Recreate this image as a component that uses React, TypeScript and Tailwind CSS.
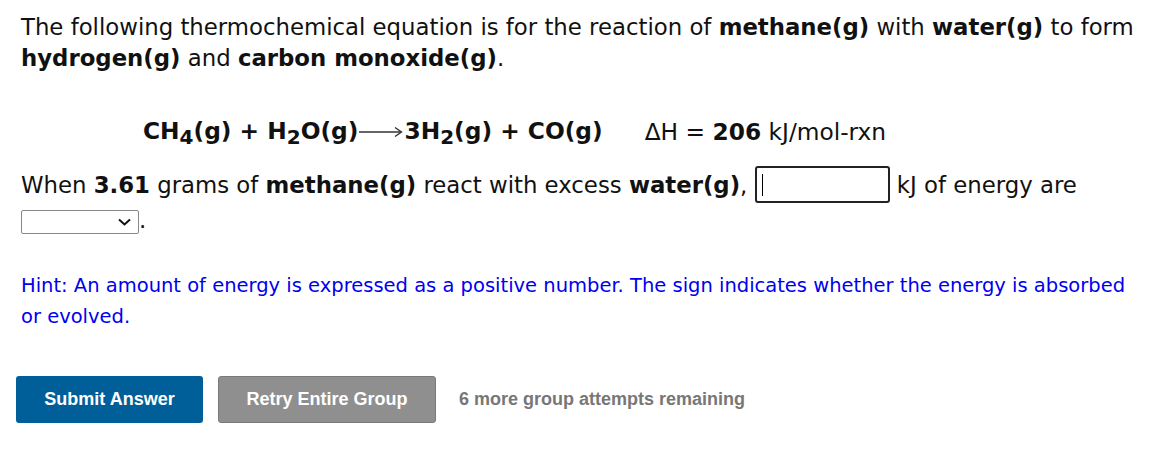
import React from "react";

function Sub({ children }: { children: React.ReactNode }) {
  return <span className="text-[20px] relative top-[5px]">{children}</span>;
}

export default function App() {
  const f = { fontFamily: '"DejaVu Sans", Verdana, sans-serif' };
  return (
    <div className="w-[1173px] h-[471px] bg-white text-[#111] overflow-hidden" style={f}>
      <div className="pl-[21px] pr-[8px] pt-[12px] text-[22.8px] leading-[31px]">
        <p>
          The following thermochemical equation is for the reaction of <b>methane(g)</b> with <b>water(g)</b> to form{" "}
          <b>hydrogen(g)</b> and <b>carbon monoxide(g)</b>.
        </p>
        <div className="mt-[42px] pl-[122px] flex items-center h-[31px] text-[23.3px]">
          <b>
            CH<Sub>4</Sub>(g) + H<Sub>2</Sub>O(g)
          </b>
          <svg width="44" height="14" viewBox="0 0 44 14" className="mx-[1px]">
            <path d="M0 7 H42" stroke="#333" strokeWidth="1.4" />
            <path d="M36 2.5 L42.5 7 L36 11.5" fill="none" stroke="#333" strokeWidth="1.4" />
          </svg>
          <b>
            3H<Sub>2</Sub>(g) + CO(g)
          </b>
          <span className="ml-[42px]">
            ΔH = <b>206</b> kJ/mol-rxn
          </span>
        </div>
        <div className="mt-[21px]">
          When <b>3.61</b> grams of <b>methane(g)</b> react with excess <b>water(g)</b>,{" "}
          <span className="inline-block align-middle w-[135px] h-[37px] border-2 border-[#222] rounded-[3px] relative -top-[2px]">
            <span className="absolute left-[5px] top-[6px] w-[1px] h-[22px] bg-black" />
          </span>{" "}
          kJ of energy are
          <br />
          <span className="inline-flex items-center justify-end align-middle w-[118px] h-[24px] border border-[#888] rounded-[2px] pr-[7px]">
            <svg width="13" height="8" viewBox="0 0 13 8">
              <path d="M1 1.5 L6.5 6.5 L12 1.5" fill="none" stroke="#111" strokeWidth="2" />
            </svg>
          </span>
          .
        </div>
        <p className="mt-[34px] text-[#0000ee] text-[19.5px] max-w-[1118px]">
          Hint: An amount of energy is expressed as a positive number. The sign indicates whether the energy is absorbed or evolved.
        </p>
      </div>
      <div className="flex items-center pl-[16px] mt-[44px]" style={{ fontFamily: '"Liberation Sans", Arial, sans-serif' }}>
        <button className="w-[187px] h-[47px] bg-[#005f99] text-white font-bold text-[18px] rounded-[3px]">Submit Answer</button>
        <button className="ml-[15px] w-[218px] h-[47px] bg-[#8f8f8f] text-white font-bold text-[18px] rounded-[3px] border border-[#7a7a7a]">
          Retry Entire Group
        </button>
        <span className="ml-[23px] text-[#777] font-bold text-[18px]">6 more group attempts remaining</span>
      </div>
    </div>
  );
}
